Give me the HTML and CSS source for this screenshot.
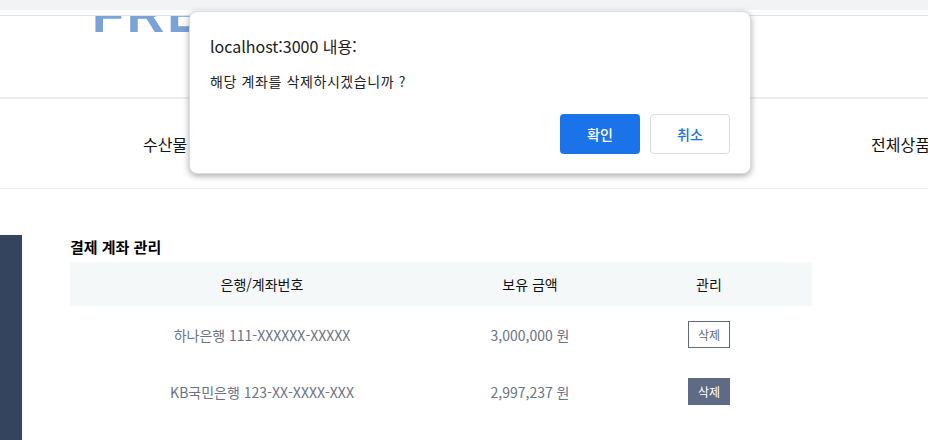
FILE: index.html
```html
<!DOCTYPE html>
<html lang="ko">
<head>
<meta charset="utf-8">
<title>결제 계좌 관리</title>
<link rel="stylesheet" href="styles.css">
</head>
<body>
<div class="browser-bar"></div>
<header class="site-header">
  <div class="logo-row"><span class="logo">FRE</span></div>
  <nav class="nav">
    <span class="nav-left">수산물</span>
    <span class="nav-right">전체상품</span>
  </nav>
</header>
<main class="content">
  <aside class="sidebar"></aside>
  <section class="panel">
    <h2 class="panel-title">결제 계좌 관리</h2>
    <div class="row row-head">
      <div>은행/계좌번호</div>
      <div>보유 금액</div>
      <div>관리</div>
    </div>
    <div class="row row-body">
      <div>하나은행 111-XXXXXX-XXXXX</div>
      <div>3,000,000 원</div>
      <div><button class="del">삭제</button></div>
    </div>
    <div class="row row-body">
      <div>KB국민은행 123-XX-XXXX-XXX</div>
      <div>2,997,237 원</div>
      <div><button class="del del-active">삭제</button></div>
    </div>
  </section>
</main>
<div class="dialog">
  <div class="dialog-title">localhost:3000 내용:</div>
  <div class="dialog-msg">해당 계좌를 삭제하시겠습니까 ?</div>
  <div class="dialog-actions">
    <button class="btn btn-ok">확인</button>
    <button class="btn btn-cancel">취소</button>
  </div>
</div>
</body>
</html>
```
FILE: styles.css
```css
* { box-sizing: border-box; }
html, body { margin: 0; height: 440px; overflow: hidden; background: #fff; }
body { font-family: "Noto Sans CJK KR", "Noto Sans", sans-serif; position: relative; width: 928px; }
.browser-bar { height: 10px; background: #f1f3f4; }
.site-header { display: block; }
.logo-row { height: 84px; margin-top: 5px; border-top: 1px solid #e0e0e0; border-bottom: 2px solid #ececec; overflow: hidden; padding-left: 92px; }
.logo { display: block; font: 900 52px/1 "Liberation Sans", sans-serif; color: #7aa2d6; margin-top: -28px; letter-spacing: 3px; }
.nav { height: 90px; border-bottom: 1px solid #ececec; display: flex; justify-content: space-between; align-items: center; font-size: 16px; color: #111; padding: 0 0 0 143px; white-space: nowrap; }
.nav-right { margin-right: -2px; }
.content { display: flex; padding-top: 46px; }
.sidebar { width: 22px; height: 210px; background: #34435e; }
.panel { width: 742px; margin-left: 48px; }
.panel-title { margin: 0; height: 27px; font-size: 15px; line-height: 24px; font-weight: 700; color: #000; }
.row { display: grid; grid-template-columns: 384px 152px 206px; text-align: center; font-size: 14px; align-items: center; }
.row-head { height: 44px; background: #f5f8f9; color: #111; }
.row-body { height: 57px; color: #6b7385; }
.del { display: block; margin: 0 auto; width: 42px; height: 27px; padding: 0; font: 12px "Noto Sans CJK KR", sans-serif; background: #fff; color: #5f6b85; border: 1px solid #5f6b85; }
.del-active { background: #5f6b85; color: #fff; }
.dialog { position: absolute; left: 189px; top: 11px; width: 562px; height: 163px; background: #fff; border: 1px solid #dcdcdc; border-radius: 8px; box-shadow: 0 2px 6px rgba(60,64,67,.45); padding: 22px 20px 19px; display: flex; flex-direction: column; }
.dialog-title { font-size: 16px; line-height: 24px; color: #202124; }
.dialog-msg { margin-top: 13px; font-size: 14px; line-height: 20px; color: #202124; letter-spacing: .6px; }
.dialog-actions { margin-top: auto; display: flex; justify-content: flex-end; gap: 10px; }
.btn { width: 80px; height: 40px; font: 500 14px "Noto Sans CJK KR", sans-serif; border-radius: 4px; padding: 0; }
.btn-ok { background: #1a73e8; color: #fff; border: 0; }
.btn-cancel { background: #fff; color: #1a73e8; border: 1px solid #dadce0; }
```
